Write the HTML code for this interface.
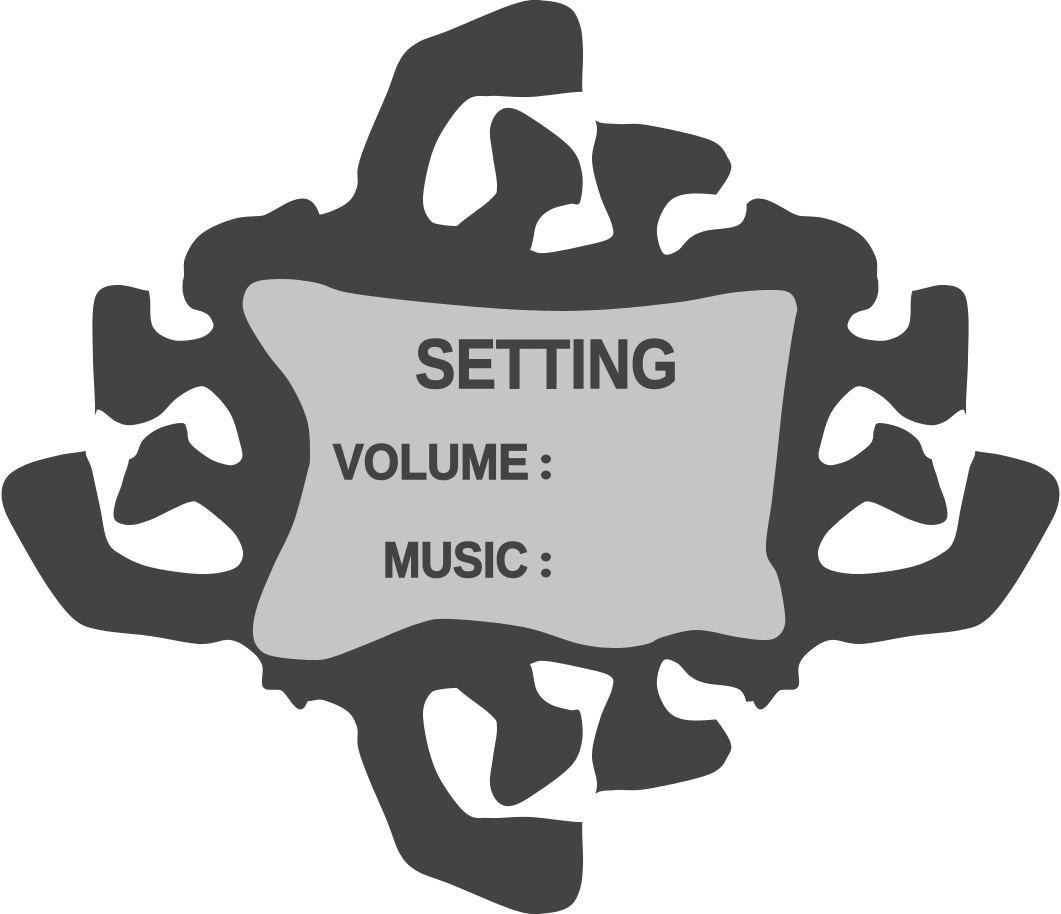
<!DOCTYPE html>
<html><head><meta charset="utf-8"><style>
html,body{margin:0;padding:0;background:#fff;width:1061px;height:914px;overflow:hidden}
svg{display:block}
</style></head><body>
<svg id="s" width="1061" height="914" viewBox="0 0 1061 914" xmlns="http://www.w3.org/2000/svg">
<g id="dark" fill="#434343"><rect x="290" y="250" width="490" height="420"/></g>
<g id="white" fill="#ffffff"></g>
<g id="dark2" fill="#434343"></g>
<path id="panel" fill="#c4c5c5" d=""/>
<g fill="#434343" stroke="#434343" stroke-width="1.5" font-family="'Liberation Sans', sans-serif" font-weight="bold">
<text x="415" y="388" font-size="70" textLength="263" lengthAdjust="spacingAndGlyphs">SETTING</text>
<text x="333" y="479" font-size="50" textLength="196" lengthAdjust="spacingAndGlyphs">VOLUME</text>
<text x="383" y="577" font-size="50" textLength="145" lengthAdjust="spacingAndGlyphs">MUSIC</text>
</g>
<g fill="#434343">
<ellipse cx="546" cy="459" rx="5" ry="4.5"/><ellipse cx="546" cy="475" rx="5" ry="4.5"/>
<ellipse cx="546" cy="557" rx="5" ry="4.5"/><ellipse cx="546" cy="573" rx="5" ry="4.5"/>
</g>
</svg>
<script>
function cr(p){var n=p.length,d='M'+p[0][0]+','+p[0][1];for(var i=0;i<n;i++){var p0=p[(i-1+n)%n],p1=p[i],p2=p[(i+1)%n],p3=p[(i+2)%n];d+='C'+(p1[0]+(p2[0]-p0[0])/6)+','+(p1[1]+(p2[1]-p0[1])/6)+' '+(p2[0]-(p3[0]-p1[0])/6)+','+(p2[1]-(p3[1]-p1[1])/6)+' '+p2[0]+','+p2[1];}return d+'Z';}
var NS='http://www.w3.org/2000/svg';
function add(g,pts,tr){var e=document.createElementNS(NS,'path');e.setAttribute('d',cr(pts));if(tr)e.setAttribute('transform',tr);document.getElementById(g).appendChild(e);}
var MX='matrix(-1,0,0,1,1061,0)',MY='matrix(1,0,0,-1,0,914)';
var L=[[320,216],[260,216],[230,220],[200,235],[185,258],[183,280],[170,288],[150,291],[120,285],[100,290],[93,310],[93,360],[95,410],[92,440],[88,450],[60,455],[25,465],[5,480],[3,505],[20,540],[50,590],[75,620],[100,630],[150,636],[200,644],[230,640],[250,650],[262,665],[263,687],[280,690],[310,692],[330,450]];
var T=[[300,216],[323,214],[347,203],[357,187],[358,167],[367,140],[387,93],[400,60],[417,43],[450,30],[517,3],[548,1],[570,8],[580,25],[583,50],[583,97],[595,120],[617,124],[647,125],[710,140],[728,158],[730,173],[713,199],[700,215],[760,215],[800,260],[760,300],[330,300],[300,260]];
var W1=[[148,285],[150,298],[153,327],[173,340],[200,338],[213,328],[210,317],[203,312],[190,307],[183,293],[182,268],[170,262],[150,272]];
var W2=[[85,445],[95,415],[100,410],[117,422],[133,425],[157,417],[177,398],[197,387],[210,390],[230,413],[240,443],[242,458],[233,465],[220,463],[207,457],[190,443],[187,430],[182,423],[160,428],[143,440],[135,456],[120,462],[95,468]];
var W3=[[88,450],[127,452],[123,480],[115,504],[115,520],[130,525],[150,520],[173,509],[190,502],[200,504],[223,522],[237,537],[243,555],[233,569],[200,574],[150,567],[120,554],[107,540],[100,507],[92,470]];
var WT=[[583,92],[586,102],[592,112],[597,130],[592,160],[600,195],[612,225],[610,238],[583,246],[545,253],[530,250],[500,240],[470,228],[443,225],[430,220],[423,200],[430,160],[443,130],[467,100],[490,96],[530,97]];
var WN=[[720,195],[687,194],[668,203],[657,228],[663,253],[677,251],[690,238],[705,231],[740,224],[745,200]];
var LB=[[497,187],[493,157],[490,130],[497,113],[510,108],[530,117],[570,147],[582,173],[580,202],[570,204],[550,210],[537,223],[530,250],[515,265],[470,260],[450,235],[490,200]];
add('dark',L);add('dark',L,MX);add('dark',T);add('dark',T,MY);
[W1,W2,W3].forEach(function(w){add('white',w);add('white',w,MX);});
add('white',WT);add('white',WT,MY);add('white',WN);add('white',WN,MY);
add('dark2',LB);add('dark2',LB,MY);
var P=[[243,300],[253,283],[283,279],[317,283],[350,293],[433,303],[523,310],[597,310],[680,302],[730,293],[770,290],[790,293],[797,307],[795,320],[790,350],[783,400],[777,456],[772,500],[766,550],[777,574],[783,600],[785,624],[777,637],[763,640],[737,637],[697,630],[663,637],[647,644],[617,648],[580,644],[523,627],[450,619],[417,624],[367,644],[333,657],[313,660],[277,657],[260,650],[253,634],[257,607],[273,567],[293,524],[307,474],[310,456],[307,420],[290,383],[267,353],[247,320]];
document.getElementById('panel').setAttribute('d',cr(P));
</script>
</body></html>
